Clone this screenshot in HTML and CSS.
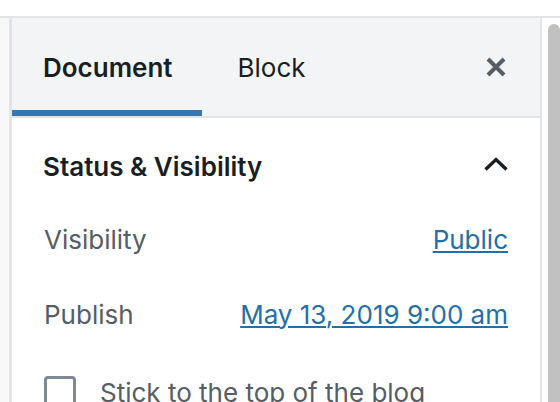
FILE: index.html
```html
<!DOCTYPE html>
<html lang="en">
<head>
<meta charset="utf-8">
<title>Document settings</title>
<link rel="stylesheet" href="styles.css">
</head>
<body>
<div class="top-gap"></div>
<div class="main">
  <div class="left-rail"></div>
  <aside class="sidebar">
    <div class="tabs">
      <button class="tab active">Document</button>
      <button class="tab">Block</button>
      <button class="close" aria-label="Close settings">
        <svg width="22" height="22" viewBox="0 0 22 22"><path d="M3 3 L19 19 M19 3 L3 19" stroke="#555d66" stroke-width="4" fill="none"/></svg>
      </button>
    </div>
    <section class="panel">
      <button class="panel-toggle">
        <span>Status &amp; Visibility</span>
        <svg class="chevron" width="24" height="14" viewBox="0 0 24 14"><polyline points="1.5,12.5 12,2.5 22.5,12.5" stroke="#191e23" stroke-width="3.4" fill="none"/></svg>
      </button>
      <div class="panel-body">
        <div class="row">
          <span class="label">Visibility</span>
          <a class="link" href="#">Public</a>
        </div>
        <div class="row">
          <span class="label">Publish</span>
          <a class="link" href="#">May 13, 2019 9:00 am</a>
        </div>
        <label class="check"><span class="box"></span>Stick to the top of the blog</label>
      </div>
    </section>
  </aside>
  <div class="gutter"><div class="thumb"></div></div>
</div>
</body>
</html>
```
FILE: styles.css
```css
html, body {
  margin: 0;
  padding: 0;
  background: #ffffff;
  height: 402px;
  overflow: hidden;
  font-family: Inter, "Noto Sans", "Liberation Sans", sans-serif;
}

.top-gap {
  height: 16px;
  border-bottom: 2px solid #e2e4e7;
}

.main {
  display: flex;
  height: 384px;
}

.left-rail {
  width: 9px;
  background: #f8f8f9;
  border-right: 3px solid #e2e4e7;
}

.sidebar {
  width: 528px;
  border-right: 2px solid #e2e4e7;
  background: #ffffff;
}

.gutter {
  flex: 1;
  padding: 6px 0 0 6px;
}

.thumb {
  width: 12px;
  height: 100%;
  background: #c1c1c1;
  border-radius: 6px 6px 0 0;
}

.tabs {
  display: flex;
  align-items: stretch;
  height: 98px;
  background: #f3f4f5;
  border-bottom: 2px solid #e2e4e7;
}

.tab {
  font-family: inherit;
  font-size: 26px;
  font-weight: 400;
  color: #191e23;
  background: none;
  border: 0;
  padding: 0 30px;
  margin: 0;
}

.tab.active {
  font-weight: 600;
  padding: 0 29px 0 31px;
  box-shadow: inset 0 -6px 0 #3278b6;
}

.tab + .tab {
  margin-left: 6px;
}

.close {
  margin-left: auto;
  margin-right: 20px;
  width: 48px;
  background: none;
  border: 0;
  padding: 0;
  display: flex;
  align-items: center;
  justify-content: center;
}

.panel-toggle {
  display: flex;
  align-items: center;
  justify-content: space-between;
  width: 100%;
  height: 96px;
  padding: 0 32px 0 31px;
  background: none;
  border: 0;
  font-family: inherit;
  font-size: 26px;
  font-weight: 600;
  color: #191e23;
}

.chevron {
  margin-top: -5px;
}

.panel-body {
  padding: 0 32px;
}

.row {
  display: flex;
  align-items: center;
  justify-content: space-between;
  height: 50px;
}

.row + .row {
  margin-top: 25px;
}

.label {
  font-size: 26px;
  color: #555d66;
}

.link {
  font-size: 26px;
  color: #2270ab;
  text-decoration: underline;
  text-decoration-thickness: 2px;
  text-underline-offset: 2px;
}

.check {
  display: flex;
  align-items: center;
  gap: 24px;
  height: 50px;
  margin-top: 28px;
  font-size: 26px;
  color: #555d66;
}

.box {
  width: 32px;
  height: 32px;
  box-sizing: border-box;
  border: 3px solid #7e8993;
  border-radius: 4px;
}
```
